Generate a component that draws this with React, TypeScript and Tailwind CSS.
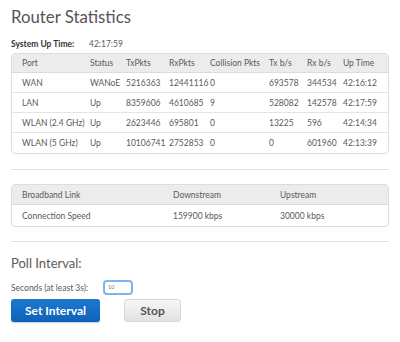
import React from "react";

const rows1 = [
  ["WAN", "WANoE", "5216363", "12441116", "0", "693578", "344534", "42:16:12"],
  ["LAN", "Up", "8359606", "4610685", "9", "528082", "142578", "42:17:59"],
  ["WLAN (2.4 GHz)", "Up", "2623446", "695801", "0", "13225", "596", "42:14:34"],
  ["WLAN (5 GHz)", "Up", "10106741", "2752853", "0", "0", "601960", "42:13:39"],
];
const head1 = ["Port", "Status", "TxPkts", "RxPkts", "Collision Pkts", "Tx b/s", "Rx b/s", "Up Time"];
const widths1 = ["w-[78px] pl-[10px]", "w-[36px]", "w-[43px]", "w-[41px]", "w-[59px]", "w-[38px]", "w-[36px]", "flex-1"];

export default function App() {
  return (
    <div className="w-[400px] h-[342px] bg-white text-[#5a5a5a] overflow-hidden px-[11px]" style={{ fontFamily: "Lato, 'Open Sans', sans-serif" }}>
      <h1 className="text-[16.8px] leading-none pt-[9px] text-[#555]">Router Statistics</h1>
      <div className="flex text-[8.5px] mt-[14px] leading-none">
        <span className="font-bold text-[#333] w-[78px]">System Up Time:</span>
        <span>42:17:59</span>
      </div>
      <div className="mt-[5px] border border-[#ddd] rounded-[4px] overflow-hidden text-[8.5px] leading-none">
        <div className="flex h-[19px] items-center bg-[#ececec] border-b border-[#dcdcdc]">
          {head1.map((h, i) => (
            <div key={i} className={widths1[i]}>{h}</div>
          ))}
        </div>
        {rows1.map((r, ri) => (
          <div key={ri} className={`flex h-[20px] items-center ${ri < rows1.length - 1 ? "border-b border-[#e4e4e4]" : ""}`}>
            {r.map((c, i) => (
              <div key={i} className={widths1[i]}>{c}</div>
            ))}
          </div>
        ))}
      </div>
      <div className="mt-[15px] border-t border-[#e2e2e2]" />
      <div className="mt-[14px] border border-[#ddd] rounded-[4px] overflow-hidden text-[8.5px] leading-none">
        <div className="flex h-[20px] items-center bg-[#ececec] border-b border-[#dcdcdc]">
          <div className="w-[161px] pl-[10px]">Broadband Link</div>
          <div className="w-[107px]">Downstream</div>
          <div className="flex-1">Upstream</div>
        </div>
        <div className="flex h-[21px] items-center">
          <div className="w-[161px] pl-[10px]">Connection Speed</div>
          <div className="w-[107px]">159900 kbps</div>
          <div className="flex-1">30000 kbps</div>
        </div>
      </div>
      <div className="mt-[14px] border-t border-[#e2e2e2]" />
      <div className="text-[13px] leading-none mt-[15px]">Poll Interval:</div>
      <div className="flex items-center mt-[10px] text-[8.5px] leading-none">
        <span className="w-[92px]">Seconds (at least 3s):</span>
        <div className="rounded-[4px] bg-[#7db4ef] p-[2px]">
          <div className="w-[26px] h-[11px] bg-white rounded-[2px] text-[5.5px] text-[#777] flex items-center pl-[3px]">10</div>
        </div>
      </div>
      <div className="flex mt-[4px] gap-[24px]">
        <button className="w-[89px] h-[23px] rounded-[3px] bg-gradient-to-b from-[#1d78d2] to-[#0e62b8] text-white font-bold text-[12px] leading-none shadow-[0_1px_1px_rgba(0,0,0,0.2)]">Set Interval</button>
        <button className="w-[57px] h-[23px] rounded-[3px] bg-gradient-to-b from-[#f7f7f7] to-[#e2e2e2] border border-[#d8d8d8] text-[#555] font-bold text-[12px] leading-none">Stop</button>
      </div>
    </div>
  );
}
